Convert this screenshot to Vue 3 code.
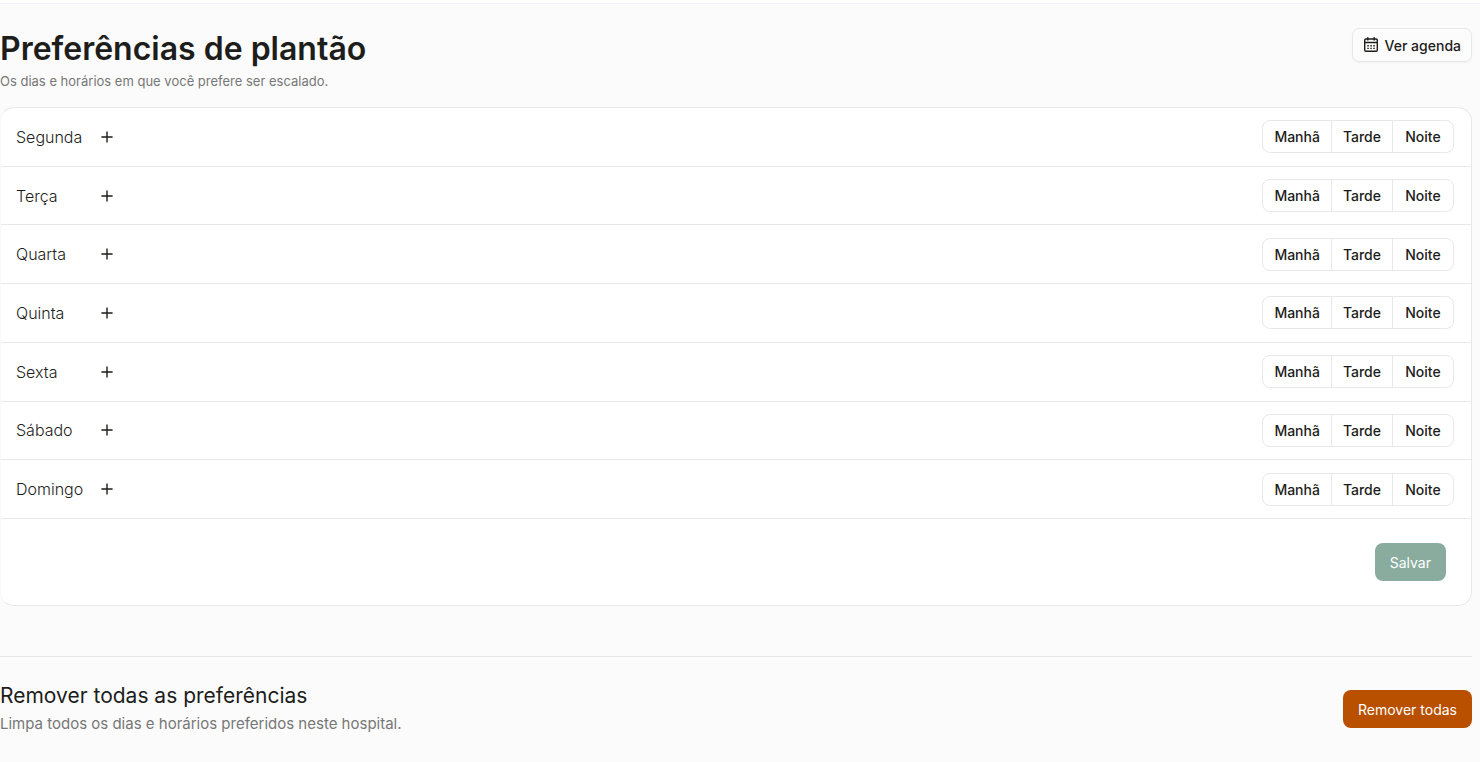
<script setup>
const days = ['Segunda', 'Terça', 'Quarta', 'Quinta', 'Sexta', 'Sábado', 'Domingo']
const shifts = ['Manhã', 'Tarde', 'Noite']
</script>

<template>
  <div class="topbar"></div>
  <main class="page">
    <header class="head">
      <div>
        <h1>Preferências de plantão</h1>
        <p class="lead">Os dias e horários em que você prefere ser escalado.</p>
      </div>
      <button type="button" class="agenda">
        <svg width="16" height="16" viewBox="0 0 16 16" fill="none" stroke="currentColor" aria-hidden="true">
          <rect x="1.7" y="2" width="12.6" height="12.3" rx="1.2" stroke-width="1.4" />
          <path d="M1.7 5.5h12.6" stroke-width="1.5" />
          <path d="M4.8 .2v3.2M11.2 .2v3.2" stroke-width="1.5" />
          <path d="M4.3 8.7h1.5M7.3 8.7h1.5M10.3 8.7h1.5M4.3 11.4h1.5M7.3 11.4h1.5M10.3 11.4h1.5" stroke-width="1.4" />
        </svg>
        Ver agenda
      </button>
    </header>

    <section class="card">
      <ul class="days">
        <li v-for="day in days" :key="day" class="day">
          <span class="name">{{ day }}</span>
          <button type="button" class="add" :aria-label="`Adicionar horário: ${day}`">
            <svg width="12" height="12" viewBox="0 0 12 12" fill="none" stroke="currentColor" stroke-width="1.4" aria-hidden="true">
              <path d="M6 .4v11.2M.4 6h11.2" />
            </svg>
          </button>
          <div class="shifts" role="group" :aria-label="day">
            <button v-for="shift in shifts" :key="shift" type="button">{{ shift }}</button>
          </div>
        </li>
      </ul>
      <div class="foot">
        <button type="button" class="solid save">Salvar</button>
      </div>
    </section>

    <section class="remove">
      <div>
        <h2>Remover todas as preferências</h2>
        <p>Limpa todos os dias e horários preferidos neste hospital.</p>
      </div>
      <button type="button" class="solid danger">Remover todas</button>
    </section>
  </main>
</template>

<style>
body {
  background: #fbfbfb;
}
</style>

<style scoped>
.topbar {
  height: 3px;
  background: #fff;
  border-bottom: 1px solid #f1f1f7;
}
.page {
  padding: 24px 8px 24px 0;
  font-family: Inter, "Liberation Sans", sans-serif;
  color: #1d1d1b;
}
h1, h2, p, ul {
  margin: 0;
  padding: 0;
}
button {
  font: inherit;
  color: inherit;
  cursor: pointer;
}
.head {
  display: flex;
  justify-content: space-between;
  align-items: flex-start;
  padding-bottom: 15px;
}
h1 {
  font-size: 32px;
  line-height: 42px;
  font-weight: 600;
}
.lead {
  font-size: 13px;
  line-height: 22px;
  font-weight: 400;
  color: #777;
}
.agenda {
  display: flex;
  align-items: center;
  gap: 6px;
  height: 34px;
  padding: 0 10px;
  border: 1px solid #e8e8e8;
  border-radius: 7px;
  background: #fcfcfc;
  box-shadow: 0 1px 2px rgba(0, 0, 0, 0.04);
  font-size: 14px;
  font-weight: 500;
}
.card {
  border: 1px solid #e8e8e8;
  border-left-color: #f8f8f8;
  border-radius: 14px;
  background: #fff;
}
.days {
  display: grid;
  grid-auto-rows: 1fr;
  min-height: 411px;
  list-style: none;
}
.day {
  display: flex;
  align-items: center;
  padding: 0 17px 0 15px;
  border-bottom: 1px solid #e8e8e8;
}
.name {
  width: 78px;
  font-size: 16px;
  font-weight: 300;
}
.add {
  display: grid;
  place-items: center;
  width: 26px;
  height: 26px;
  padding: 0;
  border: 0;
  background: none;
}
.shifts {
  display: flex;
  margin-left: auto;
  border: 1px solid #e8e8e8;
  border-radius: 8px;
}
.shifts button {
  min-width: 61px;
  height: 31px;
  padding: 0 11px;
  border: 0;
  background: none;
  font-size: 14px;
  font-weight: 500;
}
.shifts button + button {
  border-left: 1px solid #e8e8e8;
}
.foot {
  display: flex;
  justify-content: flex-end;
  padding: 24px 25px;
}
.solid {
  height: 38px;
  padding: 0 15px;
  border: 0;
  border-radius: 8px;
  color: #fff;
  font-size: 14px;
  font-weight: 400;
}
.save {
  background: #89ac9e;
}
.danger {
  background: #b85000;
}
.remove {
  display: flex;
  justify-content: space-between;
  align-items: center;
  margin-top: 50px;
  padding-top: 24px;
  border-top: 1px solid #e6e6e6;
}
h2 {
  font-size: 21px;
  line-height: 30px;
  font-weight: 400;
}
.remove p {
  font-size: 15px;
  line-height: 26px;
  font-weight: 400;
  color: #777;
}
</style>
